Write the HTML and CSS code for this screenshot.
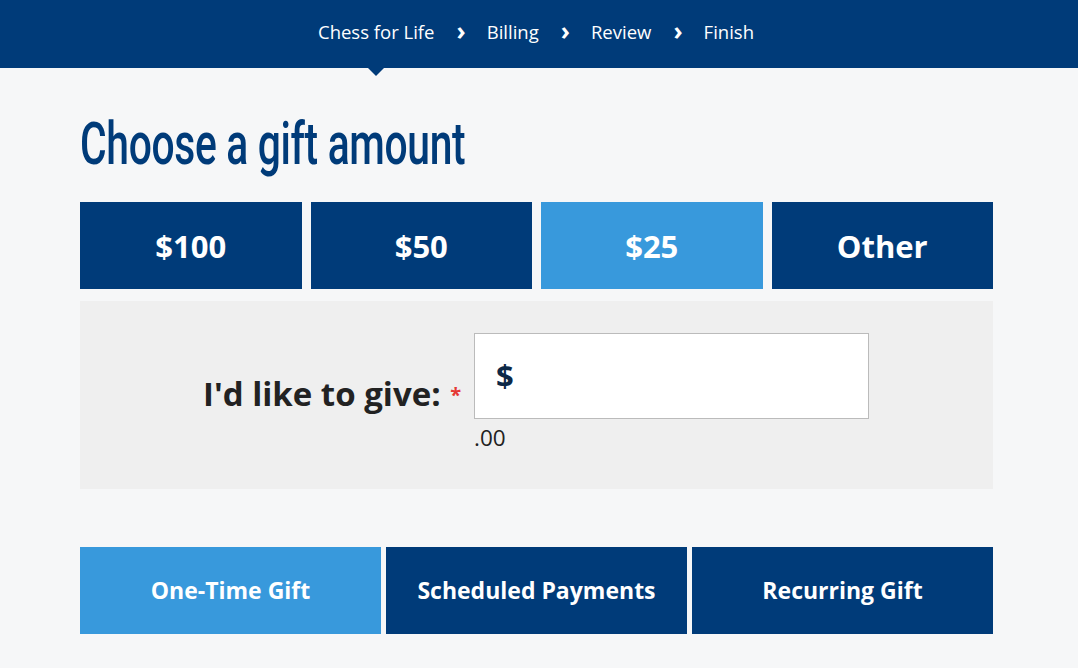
FILE: index.html
```html
<!DOCTYPE html>
<html lang="en">
<head>
    <meta charset="UTF-8">
    <meta name="viewport" content="width=device-width, initial-scale=1.0">
    <title>Choose a gift amount</title>
    <link rel="stylesheet" href="styles.css">
</head>
<body>
    <nav class="steps">
        <span class="step current">Chess for Life</span>
        <span class="sep">&#x203A;</span>
        <span class="step">Billing</span>
        <span class="sep">&#x203A;</span>
        <span class="step">Review</span>
        <span class="sep">&#x203A;</span>
        <span class="step">Finish</span>
    </nav>

    <div class="container">
        <h1><span class="title">Choose a gift amount</span></h1>

        <div class="amounts">
            <button class="amount">$100</button>
            <button class="amount">$50</button>
            <button class="amount active">$25</button>
            <button class="amount">Other</button>
        </div>

        <div class="give-panel">
            <label class="give-label">I'd like to give: <span class="req">*</span></label>
            <div class="give-field">
                <div class="money-input"><span class="dollar">$</span></div>
                <div class="cents">.00</div>
            </div>
        </div>

        <div class="types">
            <button class="type active">One-Time Gift</button>
            <button class="type">Scheduled Payments</button>
            <button class="type">Recurring Gift</button>
        </div>
    </div>
</body>
</html>
```

FILE: styles.css
```css
body {
    margin: 0;
    font-family: "Open Sans", Arial, sans-serif;
    background: #f6f7f8;
    color: #222;
}
.steps {
    height: 68px;
    background: #003b79;
    display: flex;
    justify-content: center;
    align-items: center;
    color: #fff;
    font-size: 18.5px;
    padding-right: 6px;
    padding-bottom: 5px;
    box-sizing: border-box;
}
.step {
    position: relative;
}
.step.current::after {
    content: "";
    position: absolute;
    left: 50%;
    margin-left: -10px;
    top: 47px;
    border-left: 10px solid transparent;
    border-right: 10px solid transparent;
    border-top: 10px solid #003b79;
}
.sep {
    font-weight: 700;
    font-size: 25px;
    margin: -4px 21px 0 22px;
}
.container {
    width: 913px;
    margin: 0 0 0 80px;
}
h1 {
    margin: 44px 0 26px;
    font-family: Roboto, "Liberation Sans", sans-serif;
    font-weight: 500;
    font-size: 60px;
    line-height: 64px;
    color: #003b79;
    white-space: nowrap;
}
.title {
    display: inline-block;
    transform: scaleX(0.68);
    transform-origin: left center;
    letter-spacing: -0.5px;
}
.amounts {
    display: grid;
    grid-template-columns: repeat(4, 1fr);
    gap: 9px;
}
button {
    font-family: "Open Sans", Arial, sans-serif;
    border: none;
    color: #fff;
    background: #003b79;
    font-weight: 700;
    cursor: pointer;
}
button.active {
    background: #3899dc;
}
.amount {
    height: 87px;
    font-size: 31px;
}
.give-panel {
    margin-top: 12px;
    height: 188px;
    background: #efefef;
    display: flex;
    padding-left: 123px;
    box-sizing: border-box;
}
.give-label {
    margin-top: 70px;
    font-size: 33px;
    font-weight: 700;
    color: #222;
}
.req {
    color: #e53935;
    font-size: 20px;
    vertical-align: 4px;
    margin-left: 1px;
}
.give-field {
    margin-top: 32px;
    margin-left: 13px;
}
.money-input {
    width: 393px;
    height: 84px;
    background: #fff;
    border: 1px solid #bbb;
    display: flex;
    align-items: center;
}
.dollar {
    margin-left: 21px;
    margin-top: -2px;
    font-size: 31px;
    font-weight: 700;
    color: #0d2847;
}
.cents {
    font-size: 22.5px;
    margin-top: 3px;
    color: #222;
}
.types {
    margin-top: 58px;
    display: grid;
    grid-template-columns: repeat(3, 1fr);
    gap: 5px;
}
.type {
    height: 87px;
    font-size: 23px;
    padding-bottom: 2px;
}
```
